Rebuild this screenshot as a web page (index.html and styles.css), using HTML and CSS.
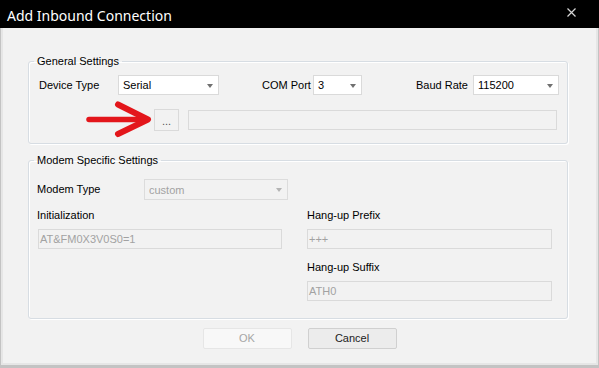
FILE: index.html
```html
<!DOCTYPE html>
<html lang="en">
<head>
    <meta charset="UTF-8" />
    <title>Add Inbound Connection</title>
    <link rel="stylesheet" href="styles.css">
</head>
<body>
    <div class="window">
        <!-- Title bar -->
        <div class="titlebar">
            <span class="title">Add Inbound Connection</span>
            <svg class="close" width="9" height="9" viewBox="0 0 9 9">
                <path d="M0.5 0.5 L8.5 8.5 M8.5 0.5 L0.5 8.5" stroke="#d6d6d6" stroke-width="1.2" fill="none" />
            </svg>
        </div>

        <div class="frame">
            <div class="client">
                <!-- General settings group -->
                <fieldset class="group">
                    <legend>General Settings</legend>
                    <div class="row row-top">
                        <span class="label label-device">Device Type</span>
                        <div class="combo combo-device"><span>Serial</span></div>
                        <span class="label label-com">COM Port</span>
                        <div class="combo combo-com"><span>3</span></div>
                        <span class="label label-baud">Baud Rate</span>
                        <div class="combo combo-baud"><span>115200</span></div>
                    </div>
                    <div class="row row-path">
                        <!-- red annotation arrow pointing at the browse button -->
                        <svg class="arrow" width="68" height="38" viewBox="0 0 68 38">
                            <path d="M3 19.5 L56 19.5" stroke="#e3161b" stroke-width="5.5" stroke-linecap="round" fill="none" />
                            <path d="M32 4.5 L62 19.5 L32 34" stroke="#e3161b" stroke-width="6" stroke-linecap="round" stroke-linejoin="round" fill="none" />
                        </svg>
                        <div class="browse">...</div>
                        <div class="field field-path"></div>
                    </div>
                </fieldset>

                <!-- Modem specific group -->
                <fieldset class="group modem">
                    <legend>Modem Specific Settings</legend>
                    <div class="row row-modem">
                        <span class="label label-modem">Modem Type</span>
                        <div class="combo combo-modem disabled"><span>custom</span></div>
                    </div>
                    <div class="modem-grid">
                        <div class="cell">
                            <span class="label">Initialization</span>
                            <div class="field field-left">AT&amp;FM0X3V0S0=1</div>
                        </div>
                        <div class="cell">
                            <span class="label">Hang-up Prefix</span>
                            <div class="field">+++</div>
                        </div>
                        <div class="cell"></div>
                        <div class="cell cell-suffix">
                            <span class="label">Hang-up Suffix</span>
                            <div class="field">ATH0</div>
                        </div>
                    </div>
                </fieldset>

                <div class="buttons">
                    <div class="btn btn-disabled">OK</div>
                    <div class="btn">Cancel</div>
                </div>
            </div>
        </div>
    </div>
</body>
</html>
```

FILE: styles.css
```css
body, html {
    margin: 0;
    padding: 0;
    overflow: hidden;
    font-family: 'Liberation Sans', Arial, sans-serif;
    font-size: 11px;
    color: #000;
}

.window {
    width: 599px;
    height: 368px;
    display: flex;
    flex-direction: column;
}

.titlebar {
    height: 28px;
    background-color: #000;
    display: flex;
    align-items: center;
    justify-content: space-between;
    padding: 0 23px 0 7px;
}

.title {
    font-family: 'Noto Sans', sans-serif;
    font-size: 14px;
    color: #fff;
    margin-top: 3px;
}

.close {
    margin-top: -4px;
}

.frame {
    flex: 1;
    display: flex;
    border: solid #c3c3c3;
    border-width: 0 2px 3px 1px;
}

.client {
    flex: 1;
    background-color: #f2f2f2;
    border: solid #e6e6e6;
    border-width: 0 2px 2px 2px;
    padding: 27px 28px 0 25px;
}

/* Group boxes */
.group {
    margin: 0;
    padding: 7px 8px 12px 8px;
    border: 1px solid #d7dde3;
    border-radius: 3px;
    box-shadow: inset 1px 1px 0 #fff, 1px 1px 0 #fff;
    min-width: 0;
}

.group legend {
    line-height: 13px;
    padding: 0 3px;
    margin-left: -3px;
    color: #000;
}

.modem {
    margin-top: 10px;
    padding: 12px 15px 17px 8px;
}

.row {
    display: flex;
    align-items: center;
}

.row-top {
    height: 20px;
    padding-left: 2px;
}

.label {
    line-height: 13px;
    white-space: nowrap;
}

.label-device {
    width: 79px;
}

.label-com {
    margin-left: 43px;
    width: 51px;
}

.label-baud {
    margin-left: auto;
    width: 57px;
}

/* Combo boxes */
.combo {
    height: 20px;
    box-sizing: border-box;
    background-color: #fff;
    border: 1px solid #dadada;
    display: flex;
    align-items: center;
    padding-left: 4px;
    position: relative;
}

.combo::after {
    content: '';
    position: absolute;
    right: 5px;
    top: 8px;
    border-left: 3.5px solid transparent;
    border-right: 3.5px solid transparent;
    border-top: 4px solid #707070;
}

.combo-device {
    width: 101px;
}

.combo-com {
    width: 49px;
}

.combo-baud {
    width: 86px;
}

.combo.disabled {
    background-color: #f2f2f2;
    color: #a2a2a2;
    border-color: #dcdcdc;
    height: 21px;
}

.combo.disabled::after {
    border-top-color: #b4b4b4;
}

/* Browse row */
.row-path {
    margin-top: 14px;
    height: 22px;
    position: relative;
    padding-left: 117px;
}

.arrow {
    position: absolute;
    left: 49px;
    top: -9px;
}

.browse {
    width: 25px;
    height: 22px;
    box-sizing: border-box;
    border: 1px solid #dadada;
    background-color: #f2f2f2;
    color: #555;
    text-align: center;
    line-height: 22px;
}

.field {
    height: 20px;
    box-sizing: border-box;
    border: 1px solid #dadada;
    background-color: #f2f2f2;
    color: #a2a2a2;
    line-height: 18px;
    padding-left: 1px;
}

.field-path {
    flex: 1;
    margin-left: 9px;
    margin-right: 2px;
}

/* Modem settings */
.row-modem {
    height: 21px;
}

.label-modem {
    width: 107px;
}

.combo-modem {
    width: 144px;
}

.modem-grid {
    display: grid;
    grid-template-columns: 245px 245px;
    column-gap: 25px;
    margin-top: 9px;
}

.cell {
    display: flex;
    flex-direction: column;
}

.cell .label {
    margin-bottom: 7px;
}

.cell-suffix {
    margin-top: 12px;
}

.field-left {
    margin-left: 1px;
}

/* Dialog buttons */
.buttons {
    display: flex;
    justify-content: center;
    gap: 16px;
    margin-top: 9px;
    padding-left: 3px;
}

.btn {
    width: 89px;
    height: 21px;
    box-sizing: border-box;
    border: 1px solid #d0d0d0;
    background-color: #ececec;
    text-align: center;
    line-height: 19px;
    color: #222;
    border-radius: 2px;
}

.btn-disabled {
    border-color: #e6e6e6;
    background-color: #f8f8f8;
    color: #a6a6a6;
}
```
